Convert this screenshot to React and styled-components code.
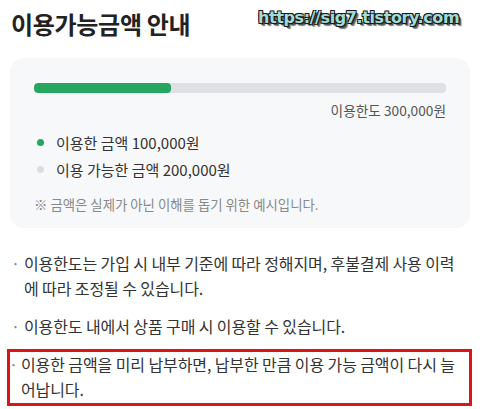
import styled, { createGlobalStyle } from "styled-components";

const GlobalStyle = createGlobalStyle`
  body {
    margin: 0;
    background: #ffffff;
    font-family: "Noto Sans CJK KR", "Noto Sans", sans-serif;
  }
`;

const Page = styled.div`
  position: relative;
  width: 490px;
  height: 409px;
  overflow: hidden;
  padding: 9px 20px 0 10px;
  box-sizing: border-box;
`;

const Title = styled.h1`
  margin: 0 0 0 1px;
  font-size: 24px;
  font-weight: 700;
  color: #222;
  line-height: 30px;
  letter-spacing: -0.3px;
`;

const Watermark = styled.div`
  position: absolute;
  top: 8px;
  left: 258px;
  font-family: "DejaVu Sans", sans-serif;
  font-weight: 700;
  font-size: 16px;
  letter-spacing: -0.4px;
  color: #9fdcd8;
  text-shadow:
    -1px -1px 0 #1a1a1a, 1px -1px 0 #1a1a1a, -1px 1px 0 #1a1a1a, 1px 1px 0 #1a1a1a,
    2px 2px 0 #555, 3px 3px 1px #777;
`;

const Card = styled.div`
  margin-top: 19px;
  background: #f7f8fa;
  border-radius: 14px;
  padding: 25px 24px 15px 24px;
  display: flex;
  flex-direction: column;
`;

const Track = styled.div`
  height: 10px;
  border-radius: 4px;
  background: #dfe0e3;
  overflow: hidden;
`;

const Fill = styled.div`
  height: 100%;
  border-radius: 4px;
  background: #27a660;
`;

const Limit = styled.div`
  margin-top: 7px;
  text-align: right;
  font-size: 13.7px;
  color: #555;
  line-height: 20px;
`;

const Legend = styled.ul`
  list-style: none;
  margin: 12px 0 0 0;
  padding: 0;
  display: flex;
  flex-direction: column;
  gap: 6px;
`;

const LegendItem = styled.li`
  display: flex;
  align-items: center;
  gap: 12px;
  font-size: 15px;
  color: #333;
  line-height: 21px;
  padding-left: 3px;

  &::before {
    content: "";
    width: 7px;
    height: 7px;
    border-radius: 50%;
    background: ${(p) => p.$color};
  }
`;

const Note = styled.p`
  margin: 15px 0 0 0;
  font-size: 13.4px;
  color: #888;
  line-height: 18px;
`;

const Notes = styled.ul`
  list-style: none;
  margin: 23px 0 0 0;
  padding: 0;
  display: flex;
  flex-direction: column;
  gap: 13px;
`;

const NoteItem = styled.li`
  position: relative;
  padding: ${(p) => (p.$boxed ? "0 8px 1px 11px" : "0 8px 0 14px")};
  margin: ${(p) => (p.$boxed ? "-3px -2px 0 -3px" : "0")};
  border: ${(p) => (p.$boxed ? "3px solid #d9141b" : "none")};
  font-size: 16px;
  color: #333;
  line-height: 25px;
  letter-spacing: -0.1px;
  word-break: break-all;

  &::before {
    content: "·";
    position: absolute;
    left: ${(p) => (p.$boxed ? "-1px" : "1px")};
    top: 0;
    color: #888;
  }
`;

export default function App() {
  const used = 100000;
  const limit = 300000;

  return (
    <>
      <GlobalStyle />
      <Page>
        <Title>이용가능금액 안내</Title>
        <Watermark>https://sig7.tistory.com</Watermark>
        <Card>
          <Track>
            <Fill style={{ width: `${(used / limit) * 100}%` }} />
          </Track>
          <Limit>이용한도 300,000원</Limit>
          <Legend>
            <LegendItem $color="#27a660">이용한 금액 100,000원</LegendItem>
            <LegendItem $color="#dcdde2">이용 가능한 금액 200,000원</LegendItem>
          </Legend>
          <Note>※ 금액은 실제가 아닌 이해를 돕기 위한 예시입니다.</Note>
        </Card>
        <Notes>
          <NoteItem>
            이용한도는 가입 시 내부 기준에 따라 정해지며, 후불결제 사용 이력에 따라 조정될 수
            있습니다.
          </NoteItem>
          <NoteItem>이용한도 내에서 상품 구매 시 이용할 수 있습니다.</NoteItem>
          <NoteItem $boxed>
            이용한 금액을 미리 납부하면, 납부한 만큼 이용 가능 금액이 다시 늘어납니다.
          </NoteItem>
        </Notes>
      </Page>
    </>
  );
}
